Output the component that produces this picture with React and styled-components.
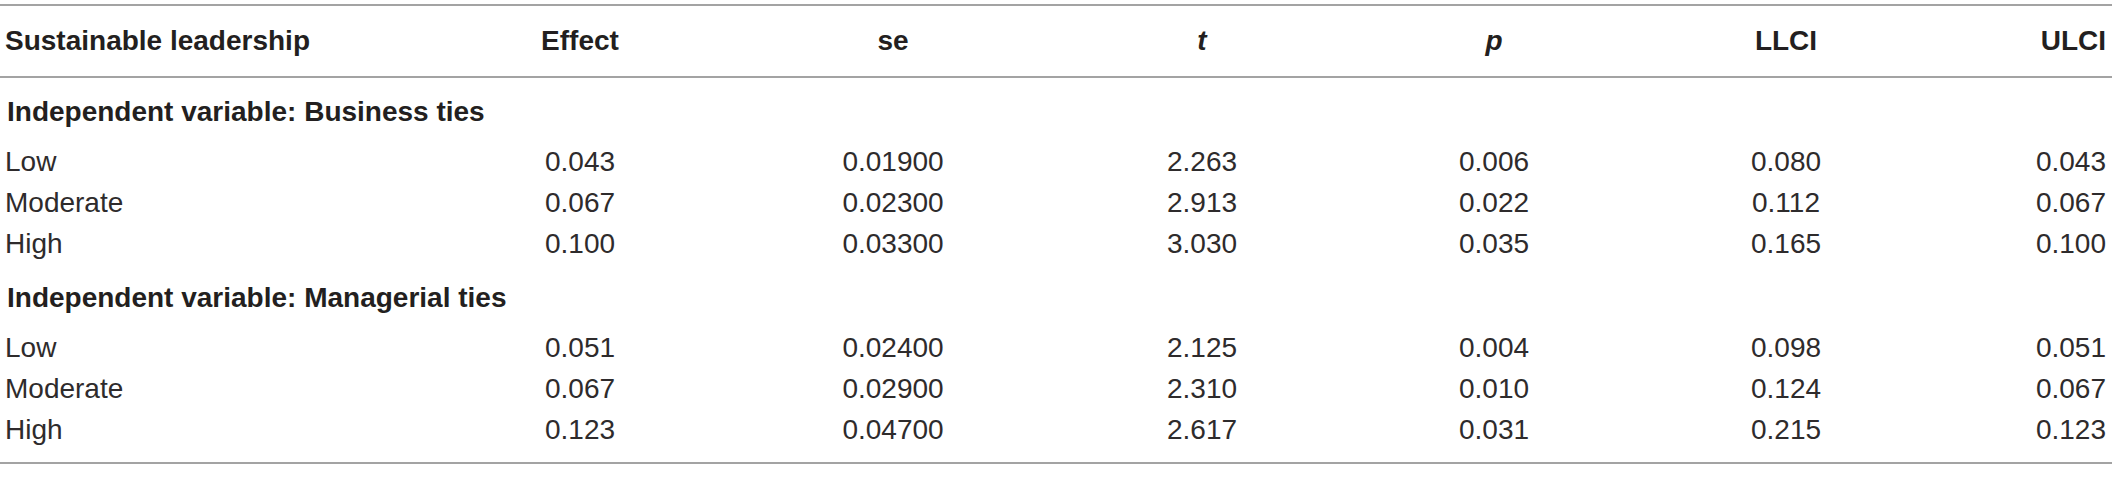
import React from "react";
import styled, { createGlobalStyle } from "styled-components";

const GlobalStyle = createGlobalStyle`
  html, body {
    margin: 0;
    padding: 0;
    background: #ffffff;
  }
  body {
    font-family: "Liberation Sans", Arial, Helvetica, sans-serif;
    color: #231f20;
  }
`;

const Page = styled.div`
  padding-top: 4px;
  width: 2112px;
`;

const Table = styled.div`
  width: 2112px;
  border-top: 2px solid #a3a3a3;
  border-bottom: 2px solid #a3a3a3;
`;

const COLS = "430px 300px 326px 292px 292px 292px 1fr";

const HeadRow = styled.div`
  display: grid;
  grid-template-columns: ${COLS};
  align-items: center;
  height: 70px;
  border-bottom: 2px solid #a3a3a3;
`;

const HeadCell = styled.div`
  font-size: 28px;
  font-weight: 700;
  font-style: ${(p) => (p.$italic ? "italic" : "normal")};
  color: #231f20;
  text-align: ${(p) => p.$align || "center"};
  padding: ${(p) => (p.$align === "left" ? "0 0 0 5px" : p.$align === "right" ? "0 6px 0 0" : "0")};
  white-space: nowrap;
`;

const Body = styled.div`
  padding: 0 0 12px;
`;

const GroupRow = styled.div`
  height: 63px;
  box-sizing: border-box;
  padding: 4px 0 0 7px;
  display: flex;
  align-items: center;
  font-size: 28px;
  font-weight: 700;
  color: #231f20;
  white-space: nowrap;
`;

const DataRow = styled.div`
  display: grid;
  grid-template-columns: ${COLS};
  align-items: center;
  height: 41px;
`;

const Cell = styled.div`
  font-size: 28px;
  font-weight: 400;
  color: #2e2b2c;
  text-align: ${(p) => p.$align || "center"};
  padding: ${(p) => (p.$align === "left" ? "0 0 0 5px" : p.$align === "right" ? "0 6px 0 0" : "0")};
  white-space: nowrap;
`;

const headers = [
  { label: "Sustainable leadership", align: "left" },
  { label: "Effect" },
  { label: "se" },
  { label: "t", italic: true },
  { label: "p", italic: true },
  { label: "LLCI" },
  { label: "ULCI", align: "right" },
];

const groups = [
  {
    title: "Independent variable: Business ties",
    rows: [
      ["Low", "0.043", "0.01900", "2.263", "0.006", "0.080", "0.043"],
      ["Moderate", "0.067", "0.02300", "2.913", "0.022", "0.112", "0.067"],
      ["High", "0.100", "0.03300", "3.030", "0.035", "0.165", "0.100"],
    ],
  },
  {
    title: "Independent variable: Managerial ties",
    rows: [
      ["Low", "0.051", "0.02400", "2.125", "0.004", "0.098", "0.051"],
      ["Moderate", "0.067", "0.02900", "2.310", "0.010", "0.124", "0.067"],
      ["High", "0.123", "0.04700", "2.617", "0.031", "0.215", "0.123"],
    ],
  },
];

const alignFor = (i) => (i === 0 ? "left" : i === 6 ? "right" : "center");

export default function App() {
  return (
    <>
      <GlobalStyle />
      <Page>
        <Table>
          <HeadRow>
            {headers.map((h) => (
              <HeadCell key={h.label} $align={h.align} $italic={h.italic}>
                {h.label}
              </HeadCell>
            ))}
          </HeadRow>
          <Body>
            {groups.map((g) => (
              <React.Fragment key={g.title}>
                <GroupRow>{g.title}</GroupRow>
                {g.rows.map((r, ri) => (
                  <DataRow key={ri}>
                    {r.map((v, i) => (
                      <Cell key={i} $align={alignFor(i)}>
                        {v}
                      </Cell>
                    ))}
                  </DataRow>
                ))}
              </React.Fragment>
            ))}
          </Body>
        </Table>
      </Page>
    </>
  );
}
